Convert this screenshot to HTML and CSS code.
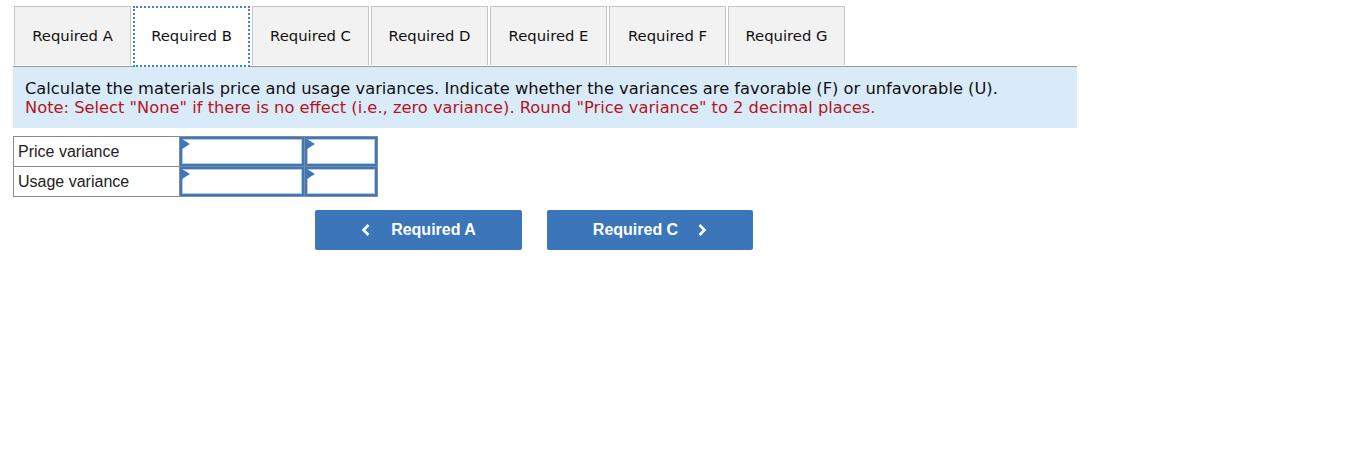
FILE: index.html
```html
<!DOCTYPE html>
<html>
	<head>
		<meta charset="utf-8"/>
		<title>Required B</title>
		<link rel="stylesheet" href="styles.css">
	</head>
	<body>
		<div id="mainContent">
			<div class="tabs">
				<div class="tab">Required A</div>
				<div class="tab active">Required B</div>
				<div class="tab">Required C</div>
				<div class="tab">Required D</div>
				<div class="tab">Required E</div>
				<div class="tab">Required F</div>
				<div class="tab">Required G</div>
			</div>
			<div class="instructions">
				<p>Calculate the materials price and usage variances. Indicate whether the variances are favorable (F) or unfavorable (U).</p>
				<p class="note">Note: Select "None" if there is no effect (i.e., zero variance). Round "Price variance" to 2 decimal places.</p>
			</div>
			<table class="answers">
				<tr>
					<td class="label">Price variance</td>
					<td class="cell"><div class="input wide"></div></td>
					<td class="cell"><div class="input narrow"></div></td>
				</tr>
				<tr>
					<td class="label">Usage variance</td>
					<td class="cell"><div class="input wide"></div></td>
					<td class="cell"><div class="input narrow"></div></td>
				</tr>
			</table>
			<div class="navButtons">
				<button class="navBtn"><svg class="chev" width="10" height="14" viewBox="0 0 10 14"><polyline points="7.5,2 2.5,7 7.5,12" fill="none" stroke="#fff" stroke-width="2.6"/></svg>Required A</button>
				<button class="navBtn">Required C<svg class="chev right" width="10" height="14" viewBox="0 0 10 14"><polyline points="2.5,2 7.5,7 2.5,12" fill="none" stroke="#fff" stroke-width="2.6"/></svg></button>
			</div>
		</div>
	</body>
</html>
```

FILE: styles.css
```css
/*main layout*/
body{
	margin: 0;
	padding: 0;
	background: #fff;
}
#mainContent{
	padding: 6px 0 0 13px;
}

/*tabs*/
.tabs{
	display: flex;
	gap: 2px;
	margin-left: 1px;
}
.tab{
	width: 115px;
	height: 56px;
	padding-bottom: 2px;
	border: 1px solid #c6c6c6;
	border-bottom: none;
	background: #f2f2f2;
	font-family: "DejaVu Sans", Verdana, sans-serif;
	font-size: 14.8px;
	color: #111;
	display: flex;
	align-items: center;
	justify-content: center;
	box-sizing: content-box;
}
.tab.active{
	background: #fff;
	border: 2px dotted #4a7cc0;
	width: 113px;
	height: 55px;
	padding-bottom: 2px;
	position: relative;
	z-index: 1;
}

/*instructions box*/
.instructions{
	width: 1040px;
	background: #d9ebf9;
	border-top: 1px solid #9a9a9a;
	padding: 12px 12px 11px 12px;
	font-family: "DejaVu Sans", Verdana, sans-serif;
	font-size: 16.3px;
	line-height: 19px;
	color: #111;
	margin-top: -1px;
}
.instructions p{
	margin: 0;
}
.instructions .note{
	color: #b3161e;
}

/*answer table*/
.answers{
	border-collapse: collapse;
	border: 1px solid #7a7a7a;
	margin-top: 8px;
	font-family: "Liberation Sans", Arial, sans-serif;
	font-size: 16px;
	color: #222;
}
.answers td{
	border: 1px solid #8a8a8a;
	padding: 0;
	height: 29px;
}
.answers td.label{
	width: 161px;
	padding-left: 4px;
}
.answers td.cell{
	padding: 0;
}
.input{
	position: relative;
	height: 25px;
	border: 2px solid #3f77bb;
	box-shadow: inset 0 0 0 1px #b4cbe9;
	background: #fff;
	box-sizing: content-box;
}
.input.wide{ width: 120px; }
.input.narrow{ width: 68px; }
.input::before{
	content: "";
	position: absolute;
	left: 0;
	top: 0;
	border-left: 8px solid #3f77bb;
	border-top: 5px solid transparent;
	border-bottom: 5px solid transparent;
}

/*nav buttons*/
.navButtons{
	display: flex;
	gap: 25px;
	margin: 13px 0 0 302px;
}
.navBtn{
	width: 207px;
	height: 40px;
	border: none;
	border-radius: 2px;
	background: #3a76b9;
	color: #fff;
	font-family: "Liberation Sans", Arial, sans-serif;
	font-weight: bold;
	font-size: 16px;
	display: flex;
	align-items: center;
	justify-content: center;
	padding: 0;
}
.navBtn + .navBtn{
	width: 206px;
}
.chev{
	margin-right: 20px;
}
.chev.right{
	margin: 0 0 0 19px;
}
```
